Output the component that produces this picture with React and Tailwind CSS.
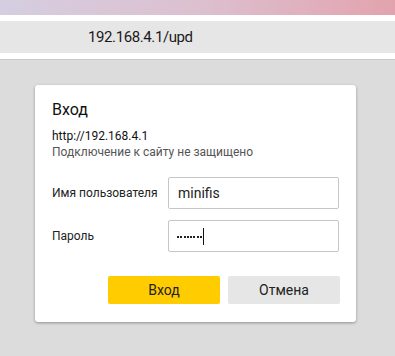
import React from "react";

const App = () => {
  return (
    <div
      className="w-[395px] h-[356px] flex flex-col overflow-hidden bg-[#dcdcdc]"
      style={{ fontFamily: "Roboto, 'Noto Sans', sans-serif" }}
    >
      {/* Top tab strip */}
      <div className="h-[15px] bg-gradient-to-r from-[#d5cee0] via-[#dcc0d0] to-[#e2a3ae]" />
      <div className="h-[6px] bg-white" />

      {/* Address bar */}
      <div className="h-[32px] bg-[#e6e6e6] flex items-center pl-[88px] text-[15px] tracking-[-0.4px] text-[#1a1a1a]">
        192.168.4.1/upd
      </div>
      <div className="h-[6px] bg-white" />

      {/* Page area */}
      <div className="flex-1 border-t border-[#c9c9c9] bg-[#dcdcdc] pt-[25px] pl-[35px]">
        <div className="w-[321px] h-[237px] bg-white rounded-[3px] shadow-[0_1px_3px_rgba(0,0,0,0.35)] px-[17px] pt-[15px]">
          <h2 className="text-[16px] leading-[20px] text-[#111]">Вход</h2>

          <p className="mt-[9px] text-[12px] leading-[15px] text-[#111]">http://192.168.4.1</p>
          <p className="mt-[1px] text-[12px] leading-[15px] text-[#555]">
            Подключение к сайту не защищено
          </p>

          {/* Fields */}
          <div className="mt-[17px] flex flex-col gap-[11px]">
            <div className="flex items-center">
              <span className="w-[116px] text-[12px] text-[#222]">Имя пользователя</span>
              <div className="w-[171px] h-[32px] border border-[#c6c6c6] rounded-[2px] flex items-center px-[9px] text-[14px] text-[#222]">
                minifis
              </div>
            </div>
            <div className="flex items-center">
              <span className="w-[116px] text-[12px] text-[#222]">Пароль</span>
              <div className="w-[171px] h-[32px] border border-[#c6c6c6] rounded-[2px] flex items-center px-[8px]">
                <div className="flex gap-[1.3px] mt-[1px]">
                  {Array.from({ length: 8 }).map((_, i) => (
                    <span key={i} className="w-[2px] h-[2px] bg-[#222]" />
                  ))}
                </div>
                <span className="ml-[1px] w-[1px] h-[17px] bg-[#111]" />
              </div>
            </div>
          </div>

          {/* Actions */}
          <div className="mt-[24px] mr-[-1px] flex justify-end gap-[8px]">
            <button className="w-[112px] h-[28px] rounded-[2px] bg-[#ffcc00] text-[14px] text-[#222]">
              Вход
            </button>
            <button className="w-[112px] h-[28px] rounded-[2px] bg-[#e6e6e6] text-[14px] text-[#222]">
              Отмена
            </button>
          </div>
        </div>
      </div>
    </div>
  );
};

export default App;
